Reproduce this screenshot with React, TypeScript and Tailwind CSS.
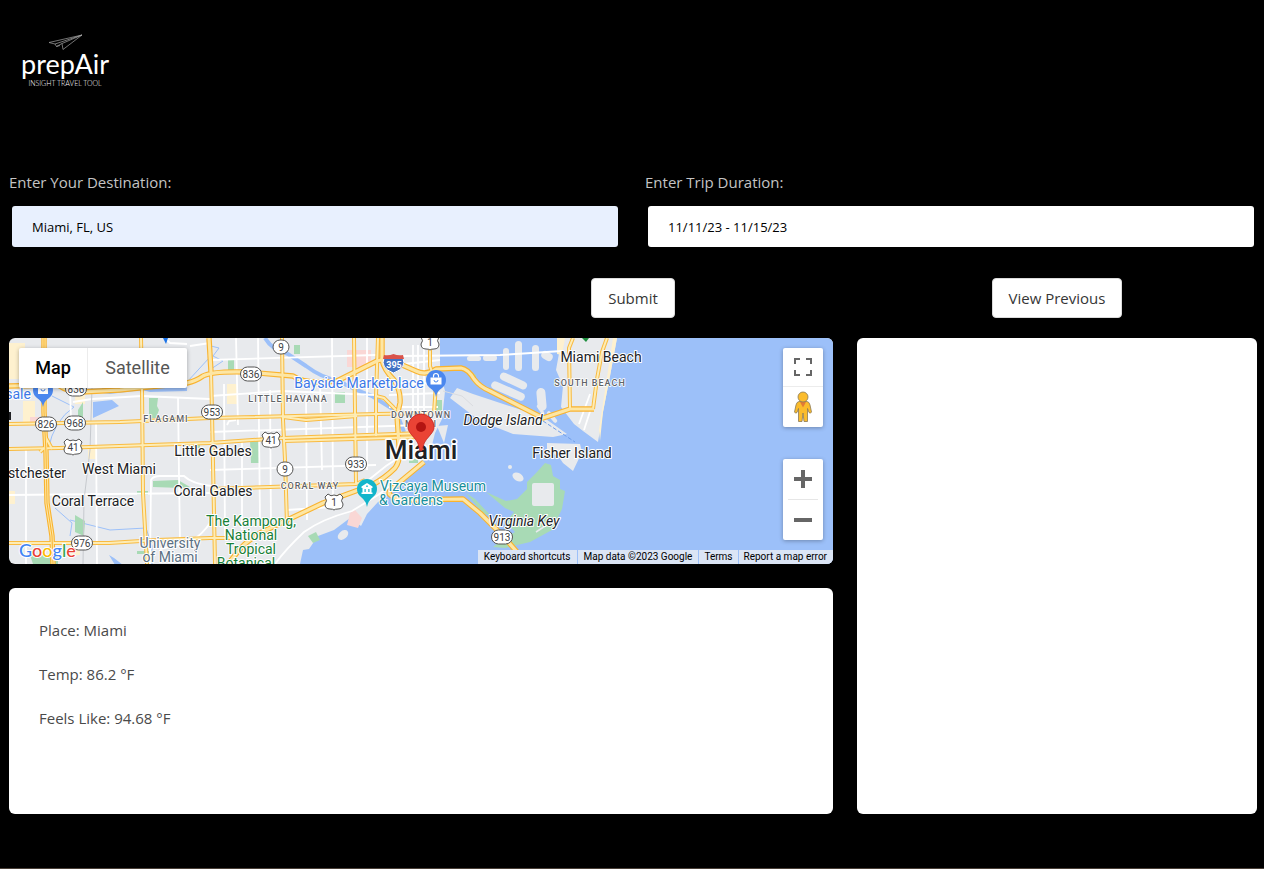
import React from "react";

type Label = {
  text: string;
  x: number;
  y: number;
  fill?: string;
  italic?: boolean;
};

const highways = [
  "M44 338 L44 412 L46 453 L47 503 L52 536 L53 564",
  "M9 386 L58 385 Q70 393 82 392 L120 390 L187 383 Q196 381 203 376 Q212 371 247 372 L293 376 Q305 385 337 381 L377 361 Q388 357 400 364 L416 371 Q426 376 436 369 L461 368 Q468 369 474 379 Q480 387 490 391 L543 418 L570 409 L594 409",
  "M382 338 L382 360 Q384 370 394 380 Q401 391 400 403 L397 416 L399 446 Q401 460 395 468 Q385 478 372 485 L323 503 L260 533 Q248 540 240 549 L228 564",
  "M209 338 L211 372",
  "M424 462 L395 486 Q385 493 392 496 L400 500 L463 499 L480 513 L503 536 L531 568",
];

const arterials = [
  "M141 338 L142 389 L143 493 L147 564",
  "M211 372 L212 413 L215 564",
  "M282 338 L283 420 L285 460 L287 524",
  "M354 338 L355 410 L356 484",
  "M378 338 L376 396 L376 436",
  "M376 396 L384 398 L396 410",
  "M9 424 L120 422 L210 418 L377 414 L430 413",
  "M283 417 L306 420 L357 416",
  "M9 449 L59 448 L210 443 L283 438 L423 433",
  "M285 441 L423 437",
  "M210 489 L270 487 L356 484 L365 480",
  "M9 543 L109 543 L157 540 L210 538 L230 538",
  "M430 338 L430 366 L436 384 L434 413",
  "M573 338 L569 348 L570 409",
  "M607 338 L602 352 L597 379 L593 409",
  "M44 448 L40 452 M45 436 L52 449",
];

const streets = [
  "M26 448 V564", "M96 423 L97 564", "M178 398 L179 476 L180 540", "M70 388 L71 420",
  "M9 495 L210 493", "M142 396 L210 399", "M73 402 L92 399 L142 396",
  "M210 396 L282 391 L376 395", "M210 360 L376 355", "M210 470 L376 465", "M210 432 L420 425",
  "M224 384 L225 540", "M236 338 L238 425", "M258 338 L260 520", "M306 395 L307 520",
  "M332 338 L333 500", "M242 440 L242 530", "M270 390 L271 530", "M320 380 L322 470",
  "M367 338 L367 470", "M150 564 L151 480 Q153 476 160 476 L184 476 Q192 484 212 486",
  "M212 520 Q202 536 188 543 L160 549", "M287 510 L333 507", "M413 345 L413 430",
  "M418 345 L418 430", "M424 345 L424 430", "M389 395 L440 393", "M389 407 L438 407",
  "M389 384 L437 383", "M402 356 L500 355 L562 351", "M404 364 L440 360",
  "M275 564 Q285 550 304 532 Q322 519 352 511 L378 495 L394 483",
  "M366 482 L386 466 L412 449", "M579 424 L590 394 M584 430 L597 390",
  "M227 425 L229 421 L236 420",
  "M165 338 L170 343 L187 344 M190 346 L210 343",
];

const parks = [
  "M149 398 h9 l-1 8 2 4 -3 8 h-7z", "M153 481 l25 -1 12 7 -9 1 -28 -1z", "M75 515 l10 6 -1 15 -9 -4z",
  "M250 440 h10 v23 h-9z", "M335 392 h10 v11 h-10z", "M228 359 h6 v12 h-6z", "M294 345 h6 v9 h-6z",
  "M30 555 h28 v9 h-25z", "M308 536 l8 -4 4 8 -7 3z", "M78 410 l5 -8 v16 h-5z", "M137 551 h12 v3 h-12z",
  "M137 491 h11 v4 h-11z", "M436 400 h6 v12 h-6z", "M409 459 h9 v4 h-9z", "M466 369 l10 6 -1 10z",
  "M603 370 l4 2 -6 40 h-4z", "M584 338 h6 l-3 4z", "M191 445 h9 v3 h-9z",
];

const venetianIsles: [number, number, number, number, number][] = [
  [503, 348, 6, 22, 0], [515, 341, 7, 30, 0], [532, 345, 7, 26, 0], [543, 350, 8, 12, -60],
  [467, 356, 14, 5, 0], [483, 355, 14, 6, 0], [499, 377, 29, 8, 25], [490, 387, 36, 8, 24],
  [537, 388, 9, 23, -5], [545, 415, 14, 4, 50], [535, 408, 11, 3, 55],
];

const shields: [string, number, number, number][] = [
  ["9", 281, 347, 16], ["836", 251, 374, 21], ["836", 76, 389, 21], ["826", 46, 424, 21],
  ["968", 75, 423, 21], ["953", 212, 412, 21], ["9", 285, 469, 16], ["933", 356, 464, 21],
  ["976", 82, 543, 21], ["913", 502, 537, 21],
];

const routes: [string, number, number][] = [
  ["41", 73, 447], ["41", 271, 440], ["1", 334, 502], ["1", 430, 342],
];

const labels: Label[] = [
  { text: "West Miami", x: 119, y: 474 },
  { text: "stchester", x: 37, y: 478 },
  { text: "Coral Terrace", x: 93, y: 506 },
  { text: "Little Gables", x: 213, y: 456 },
  { text: "Coral Gables", x: 213, y: 496 },
  { text: "Miami Beach", x: 601, y: 362 },
  { text: "Fisher Island", x: 572, y: 458 },
  { text: "Dodge Island", x: 503, y: 425, italic: true },
  { text: "Virginia Key", x: 524, y: 526, italic: true },
  { text: "Bayside Marketplace", x: 359, y: 388, fill: "#3b78e7" },
  { text: "sale", x: 18, y: 399, fill: "#3b78e7" },
  { text: "Vizcaya Museum", x: 433, y: 491, fill: "#168e9b" },
  { text: "& Gardens", x: 411, y: 505, fill: "#168e9b" },
  { text: "The Kampong,", x: 251, y: 526, fill: "#188038" },
  { text: "National", x: 251, y: 540, fill: "#188038" },
  { text: "Tropical", x: 251, y: 554, fill: "#188038" },
  { text: "Botanical", x: 246, y: 568, fill: "#188038" },
  { text: "University", x: 170, y: 548, fill: "#5b7083" },
  { text: "of Miami", x: 170, y: 562, fill: "#5b7083" },
];

const districts: Label[] = [
  { text: "FLAGAMI", x: 166, y: 422 },
  { text: "LITTLE HAVANA", x: 288, y: 402 },
  { text: "CORAL WAY", x: 310, y: 489 },
  { text: "DOWNTOWN", x: 421, y: 418 },
  { text: "MIAMI", x: 421, y: 427 },
  { text: "SOUTH BEACH", x: 590, y: 386 },
];

function MapDrawing() {
  return (
    <svg
      viewBox="9 338 824 226"
      preserveAspectRatio="xMidYMid slice"
      className="block h-full w-full font-['Roboto',sans-serif]"
      role="img"
      aria-label="Street map of Miami"
    >
      <rect x="9" y="338" width="824" height="226" fill="#e8eaed" />
      <g fill="#fef1cf">
        <path d="M9 343h16v36h-16zM23 401h12v22h-12zM88 446h9v13h-9zM227 384h10v20h-10zM9 491h6v13h-6zM75 390h10v14h-10zM70 545h10v10h-10z" />
      </g>
      <g fill="#fad7d5">
        <path d="M347 350h24v17h-24zM30 417h12v7h-12z" />
      </g>
      <path
        fill="#9cc0f9"
        d="M440 338 L440 371 L445 391 L442 419 L435 433 L431 449 L417 466 L404 478 L394 489 L378 502 L367 514 L361 526 L350 518 L334 530 L318 536 L309 549 L303 550 L300 564 H833 V338Z"
      />
      <path fill="#9cc0f9" d="M93 402 l19 -2 7 6 -26 12zM110 394 l32 -4 8 2 37 -1 v-6 h-85 v8zM109 555 l5 3 9 7 h-8z" />
      <g fill="none" stroke="#9cc0f9">
        <path d="M265 338 Q272 350 288 354 L306 366 Q322 378 337 380 Q355 390 372 396 L396 411 L404 432" strokeWidth="4" />
        <path d="M211 346 l8 2 -6 8 10 5 -12 8 M187 382 L210 357 M48 450 Q54 420 74 407 L52 396 M55 508 L72 523 L70 536 M70 520 L110 530 L146 528 L152 546 M152 546 v18" strokeWidth="1" />
      </g>
      <g fill="#a8dab5">{parks.map((d) => <path key={d} d={d} />)}</g>
      <path fill="#fad7d5" d="M350 513 l5 -3 7 8 -4 10 -11 -3z" />
      <ellipse cx="343" cy="535" rx="6" ry="4" transform="rotate(-40 343 535)" fill="#e8eaed" />

      <path fill="#e8eaed" d="M557 338 L560 348 L556 370 L563 386 L561 407 L574 424 L583 431 L598 442 L603 412 L610 376 L617 338Z" />
      <path fill="#fef1cf" d="M557 338 h8 l-3 17 -5 -1zM613 338 h4 L610 376 L603 412 L600 441 L599 430Z" />
      <path fill="#e8eaed" d="M457 388 L473 394 L543 417 L567 434 L553 437 L513 434 L480 421 L450 398Z" />
      <path fill="#e8eaed" d="M547 443 L580 444 L582 452 L573 471 L563 463 L559 457 L547 450Z" />
      <path fill="#e8eaed" d="M437 426 L448 425 L444 443Z" />
      <ellipse cx="518" cy="477" rx="6" ry="4" transform="rotate(30 518 477)" fill="#e8eaed" />
      <circle cx="510" cy="467" r="2" fill="#e8eaed" />
      <g fill="#e8eaed">
        {venetianIsles.map(([x, y, w, h, angle]) => (
          <rect key={`${x}-${y}`} x={x} y={y} width={w} height={h} rx={Math.min(w, h) / 2} transform={`rotate(${angle} ${x + w / 2} ${y + h / 2})`} />
        ))}
      </g>
      <path fill="none" stroke="#dadce0" d="M443 391 L462 396 L473 406" />
      <path fill="none" stroke="#6f9eea" strokeDasharray="4 2" d="M543 421 L575 442" />
      <path fill="#a8dab5" d="M545 463 L551 465 L553 476 L560 480 L560 489 L565 491 L562 509 L552 530 L530 542 L505 548 L493 547 L506 537 L515 532 L506 522 L514 512 L505 508 L486 492 L506 501 L517 499 L527 489 L527 482 L537 472Z" />
      <path fill="#a8dab5" d="M466 493 L475 499 L491 516 L483 513Z" />
      <path fill="#fef1cf" d="M518 562 h13 l-2 -4z" />
      <rect x="532" y="483" width="22" height="23" rx="2" fill="#e8eaed" />
      <path fill="none" stroke="#e8eaed" strokeWidth="1.5" d="M536 532 L556 519" />

      <g fill="none" stroke="#fff" strokeWidth="1.8">
        {streets.map((d) => <path key={d} d={d} />)}
      </g>
      <path d="M83 564 L84 500 L90 450 L92 388" fill="none" stroke="#c6c9ce" />
      <g fill="none" strokeLinejoin="round">
        {arterials.map((d) => <path key={d} d={d} stroke="#f9bb41" strokeWidth="4" />)}
        {highways.map((d) => <path key={d} d={d} stroke="#f9b32f" strokeWidth="5.4" />)}
        {arterials.map((d) => <path key={d} d={d} stroke="#fdecb5" strokeWidth="2" />)}
        {highways.map((d) => <path key={d} d={d} stroke="#fde6a4" strokeWidth="3.2" />)}
        <path d="M44 338 L44 412 L46 453 L47 503 L52 536 L53 564" stroke="#f9b32f" strokeWidth="1" />
      </g>

      <g textAnchor="middle" fontSize="9" fontWeight="500" letterSpacing="1" fill="#5f6368" stroke="#fff" strokeWidth="1.6" strokeLinejoin="round" paintOrder="stroke">
        {districts.map((l) => <text key={l.text} x={l.x} y={l.y}>{l.text}</text>)}
      </g>

      <g stroke="#555" fill="#fff">
        {shields.map(([t, x, y, w]) => <rect key={`${t}-${x}`} x={x - w / 2} y={y - 7} width={w} height="14" rx="7" />)}
        {routes.map(([t, x, y]) => (
          <path key={`${t}-${x}`} transform={`translate(${x} ${y})`} d="M-6 -8 Q-3 -5 0 -7 Q3 -5 6 -8 L9 -5 Q6 -1 9 2 Q9 7 4 7 Q1 7 0 8 Q-1 7 -4 7 Q-9 7 -9 2 Q-6 -1 -9 -5Z" />
        ))}
      </g>
      <g textAnchor="middle" fontSize="10" fill="#3c4043">
        {shields.map(([t, x, y]) => <text key={`${t}-${x}`} x={x} y={y + 4}>{t}</text>)}
        {routes.map(([t, x, y]) => <text key={`${t}-${x}`} x={x} y={y + 4}>{t}</text>)}
      </g>
      <path fill="#4272c4" stroke="#fff" d="M384 358 h19 Q407 368 393.500 373 Q380 368 384 358Z" />
      <path fill="#d9534a" d="M384 355 q5 1 9.500 -1 q4.500 2 9.500 1 l1 4 h-21z" />
      <text x="394" y="368" textAnchor="middle" fontSize="9" fontWeight="700" fill="#fff">395</text>

      <g textAnchor="middle" stroke="#fff" strokeWidth="2" strokeLinejoin="round" paintOrder="stroke">
        {labels.map((l) => (
          <text key={l.text} x={l.x} y={l.y} fontSize="14" fill={l.fill ?? "#202124"} fontStyle={l.italic ? "italic" : "normal"}>
            {l.text}
          </text>
        ))}
        <text x="421" y="459" fontSize="26" fontWeight="500" fill="#202124" strokeWidth="3">Miami</text>
      </g>
      <path fill="#202124" d="M9 412 h2 v8 h-2z" />

      <path fill="#4a87ee" d="M436 397 Q435 391 430 388 A10 10 0 1 1 442 388 Q437 391 436 397Z" />
      <path fill="#fff" d="M430.500 377.500 h11 v7 h-11z" />
      <path fill="none" stroke="#fff" strokeWidth="1.200" d="M433.500 377.500 v-1.500 a2.500 2.500 0 0 1 5 0 v1.500" />
      <path fill="none" stroke="#4a87ee" d="M434 380 a2 2 0 0 0 4 0" />
      <path fill="#4a87ee" d="M43 407 Q42 401 37 398 A10 10 0 1 1 49 398 Q44 401 43 407Z" />
      <path fill="#fff" d="M38 387 h10 v7 h-10z" />
      <path fill="none" stroke="#4a87ee" d="M41 389 a2 2 0 0 0 4 0" />
      <path fill="#1a73e8" d="M163 338 h5 l-2 6z" />
      <path fill="#1e8e3e" d="M582 338 h7 l-3 4z" />
      <path fill="#12b5cb" d="M367 507 Q366 501 361 497 A10 10 0 1 1 373 497 Q368 501 367 507Z" />
      <path fill="#fff" d="M361.500 486.500 l5.500 -3.500 5.500 3.500 v1.500 h-11zM362.500 488 h9 v4.500 h-9zM361.500 492.500 h11 v1.500 h-11z" />
      <path fill="#12b5cb" d="M364.500 489 h1.200 v3 h-1.200zM368.300 489 h1.200 v3 h-1.200zM366.300 485.500 h1.400 v1.400 h-1.400z" />

      <path
        fill="#ea4335"
        stroke="#c5221f"
        strokeWidth="0.8"
        d="M421 451 C420 451 419.600 450 419 447 C418 441 414 438 411 434 C409 431.500 408 430 408 427 A13 13 0 1 1 434 427 C434 430 433 431.500 431 434 C428 438 424 441 423 447 C422.400 450 422 451 421 451Z"
      />
      <circle cx="421" cy="427" r="5" fill="#b31412" />
    </svg>
  );
}

function GoogleMark() {
  return (
    <a
      href="#google"
      aria-label="Google"
      className="absolute bottom-px left-[10px] font-['Lato',sans-serif] text-[18px] leading-[26px] font-medium [paint-order:stroke] [-webkit-text-stroke:2px_white]"
    >
      <span className="text-[#4285f4]">G</span>
      <span className="text-[#ea4335]">o</span>
      <span className="text-[#fbbc04]">o</span>
      <span className="text-[#4285f4]">g</span>
      <span className="text-[#34a853]">l</span>
      <span className="text-[#ea4335]">e</span>
    </a>
  );
}

function Pegman() {
  return (
    <svg viewBox="0 0 20 32" className="h-8 w-5" aria-hidden="true">
      <path d="M6 10.500 Q3.500 11 3 14 L1.500 21 Q2.500 23 4 21.500 L5.500 17.500 V30.500 H9 L10 22 L11 30.500 H14.500 V17.500 L16 21.500 Q17.500 23 18.500 21 L17 14 Q16.500 11 14 10.500Z" fill="#fbbc2c" stroke="#8a7a55" strokeWidth="0.8" />
      <path d="M7 11 H13 L10 16.500Z" fill="#e37a35" />
      <circle cx="10" cy="6" r="5" fill="#fbbc2c" stroke="#8a7a55" strokeWidth="0.8" />
    </svg>
  );
}

function MapPanel() {
  return (
    <section aria-label="Map" className="relative h-[226px] overflow-hidden rounded-md font-['Roboto',sans-serif]">
      <MapDrawing />
      <div className="absolute top-[10px] left-[10px] flex h-10 rounded-xs bg-white text-[18px] shadow-[0_1px_4px_rgba(0,0,0,0.3)]">
        <button type="button" className="w-[69px] border-r border-[#ececec] font-medium text-black">Map</button>
        <button type="button" className="w-[99px] text-[#565656]">Satellite</button>
      </div>
      <div className="absolute top-[10px] right-[10px] flex w-10 flex-col rounded-xs bg-white shadow-[0_1px_4px_rgba(0,0,0,0.3)]">
        <button type="button" aria-label="Toggle fullscreen view" className="flex h-[39px] items-center justify-center border-b border-[#ececec]">
          <svg viewBox="0 0 18 18" className="h-[18px] w-[18px]" fill="none" stroke="#666" strokeWidth="2" aria-hidden="true">
            <path d="M1 6V1H6M12 1H17V6M17 12V17H12M6 17H1V12" />
          </svg>
        </button>
        <button type="button" aria-label="Open Street View" className="flex h-10 items-center justify-center">
          <Pegman />
        </button>
      </div>
      <div className="absolute right-[10px] bottom-6 flex w-10 flex-col items-center rounded-xs bg-white shadow-[0_1px_4px_rgba(0,0,0,0.3)]">
        <button type="button" aria-label="Zoom in" className="flex h-10 w-10 items-center justify-center">
          <svg viewBox="0 0 18 18" className="h-[18px] w-[18px]" fill="#666" aria-hidden="true">
            <path d="M7 0h4v7h7v4h-7v7H7v-7H0V7h7z" />
          </svg>
        </button>
        <span className="h-px w-[30px] bg-[#e6e6e6]" />
        <button type="button" aria-label="Zoom out" className="flex h-10 w-10 items-center justify-center">
          <svg viewBox="0 0 18 18" className="h-[18px] w-[18px]" fill="#666" aria-hidden="true">
            <path d="M0 7h18v4H0z" />
          </svg>
        </button>
      </div>
      <GoogleMark />
      <div className="absolute right-0 bottom-0 flex gap-px text-[10px] leading-[14px] text-black">
        <button type="button" className="bg-[#dbe5f5] px-[6px]">Keyboard shortcuts</button>
        <span className="bg-[#dbe5f5] px-[6px]">Map data ©2023 Google</span>
        <a href="#terms" className="bg-[#dbe5f5] px-[5px]">Terms</a>
        <a href="#report" className="bg-[#dbe5f5] pr-[6px] pl-[5px]">Report a map error</a>
      </div>
    </section>
  );
}

function Logo() {
  return (
    <a href="#home" className="flex w-[88px] flex-col items-center font-['Lato',sans-serif] text-white">
      <svg viewBox="0 0 35 16" className="h-4 w-[35px]" fill="none" stroke="#a3a3a3" strokeWidth="0.7" strokeLinejoin="round" aria-hidden="true">
        <path d="M34 1 L1 8.500 L7 10 L34 1 L15 15.500 L14 9.500 L34 1 M7 10 L8.500 12.500 L14 9.500 M8.500 12.500 L12 11.500" />
      </svg>
      <span className="text-[27px] leading-[28px]">prepAir</span>
      <span className="pt-px text-[7px] leading-[8px] font-light whitespace-nowrap">INSIGHT TRAVEL TOOL</span>
    </a>
  );
}

const buttonClass =
  "h-10 cursor-pointer rounded-sm border border-[#dbdbdb] bg-white px-4 text-[15px] leading-6 text-[#363636]";
const inputClass =
  "mx-[3px] h-[41px] rounded-[3px] px-5 text-[13px] text-black outline-none";

export default function App() {
  return (
    <div className="flex min-h-screen flex-col border-b border-[#4a4038] bg-black pr-[7px] pl-[9px] font-['Open_Sans','Noto_Sans',sans-serif] text-[15px] leading-6 text-[#4a4a4a]">
      <header className="px-3 pt-[34px] pb-[84px]">
        <Logo />
      </header>
      <form onSubmit={(e) => e.preventDefault()}>
        <div className="grid grid-cols-2 gap-6 text-[#c4c4c4]">
          <div className="flex flex-col gap-3">
            <label htmlFor="destination" className="leading-[23px]">Enter Your Destination:</label>
            <input id="destination" type="text" defaultValue="Miami, FL, US" className={`${inputClass} bg-[#e8f0fe]`} />
          </div>
          <div className="flex flex-col gap-3">
            <label htmlFor="duration" className="leading-[23px]">Enter Trip Duration:</label>
            <input id="duration" type="text" defaultValue="11/11/23 - 11/15/23" className={`${inputClass} bg-white`} />
          </div>
        </div>
        <div className="grid grid-cols-3 gap-6 pt-[31px] pb-5">
          <div className="col-start-2 flex justify-center">
            <button type="submit" className={buttonClass}>Submit</button>
          </div>
          <div className="flex justify-center">
            <button type="button" className={buttonClass}>View Previous</button>
          </div>
        </div>
      </form>
      <main className="grid grid-cols-[minmax(0,103fr)_minmax(0,50fr)] gap-6 pb-[54px]">
        <div className="flex flex-col gap-6">
          <MapPanel />
          <section aria-label="Weather" className="flex h-[226px] flex-col gap-5 rounded-md bg-white p-[30px]">
            <p>Place: Miami</p>
            <p>Temp: 86.2 °F</p>
            <p>Feels Like: 94.68 °F</p>
          </section>
        </div>
        <aside aria-label="Details" className="rounded-md bg-white" />
      </main>
    </div>
  );
}
